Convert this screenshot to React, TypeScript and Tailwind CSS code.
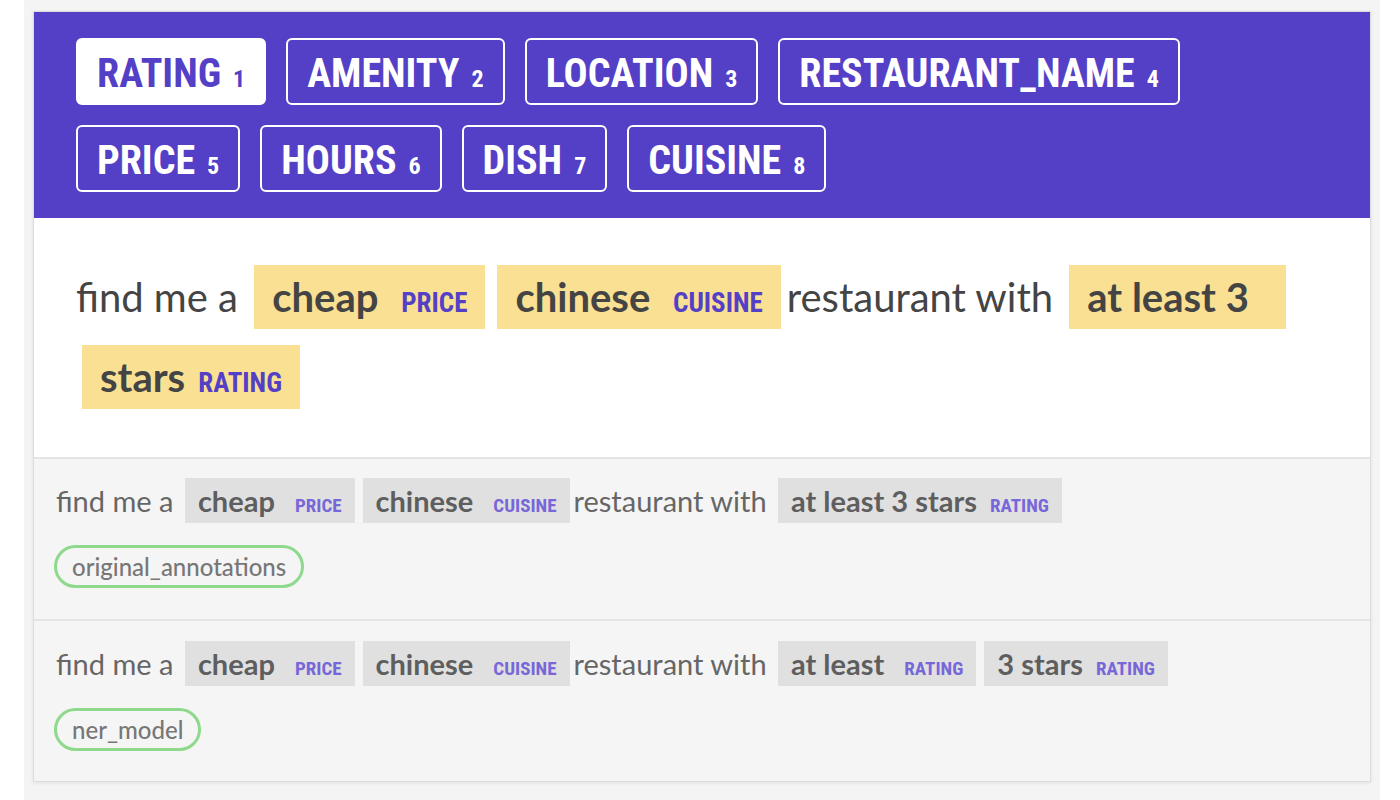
import React from 'react';

const labels = ['RATING', 'AMENITY', 'LOCATION', 'RESTAURANT_NAME', 'PRICE', 'HOURS', 'DISH', 'CUISINE'];

const cond = "font-['Roboto_Condensed','Liberation_Sans_Narrow','DejaVu_Sans_Condensed',Roboto,sans-serif] font-stretch-condensed";

const Mark: React.FC<{ text: React.ReactNode; label: string }> = ({ text, label }) => (
  <span className="mx-[6px] box-decoration-clone bg-[#fae092] px-[18px] py-[8px] font-bold">
    {text}
    <span className={`${cond} ml-[13px] text-[27px] font-bold leading-none text-[#5440c6]`}>{label}</span>
  </span>
);

const SmallMark: React.FC<{ text: string; label: string }> = ({ text, label }) => (
  <span className="mx-[4px] bg-[#e0e0e0] px-[13px] py-[5px] font-bold text-[#5e5e5e]">
    {text}
    <span className={`${cond} ml-[13px] text-[19px] font-bold leading-none text-[#7767d9]`}>{label}</span>
  </span>
);

const Pill: React.FC<{ children: React.ReactNode }> = ({ children }) => (
  <div className="ml-[-2px] mt-[22px] inline-flex h-[43px] items-center rounded-full border-[3px] border-[#8fd98c] px-[15px] text-[24px] font-medium leading-none text-[#777]">
    {children}
  </div>
);

export default function App() {
  return (
    <div className="min-h-screen bg-white font-['Lato','Noto_Sans',sans-serif]">
      <div className="ml-[24px] w-[1356px] bg-[#f4f4f4] px-[9px] pb-[19px] pt-[11px]">
        <div className="border border-[#dcdcdc] bg-white shadow-[0_1px_4px_rgba(0,0,0,0.08)]">
          {/* label buttons */}
          <div className="flex flex-wrap bg-[#5440c6] px-[32px] py-[16px]">
            {labels.map((l, i) => (
              <div
                key={l}
                className={`m-[10px] flex h-[67px] items-center rounded-[6px] border-2 border-white px-[19px] pt-[4px] ${
                  i === 0 ? 'bg-white text-[#5440c6]' : 'text-white'
                }`}
              >
                <span className={`${cond} text-[40px] font-bold leading-none`}>{l}</span>
                <span className={`${cond} ml-[12px] mt-[10px] text-[24px] font-bold leading-none`}>{i + 1}</span>
              </div>
            ))}
          </div>

          {/* current example */}
          <div className="px-[42px] pb-[40px] pt-[39px] text-[40px] leading-[80px] text-[#444]">
            find me a <Mark text="cheap " label="PRICE" />
            <Mark text="chinese " label="CUISINE" />
            restaurant with{' '}
            <Mark
              text={
                <>
                  at least 3{'\u00a0\u00a0'}
                  <br />
                  stars
                </>
              }
              label="RATING"
            />
          </div>

          {/* compared annotations */}
          <div className="border-t-2 border-[#e4e4e4] bg-[#f5f5f5] px-[22px] pb-[31px] pt-[20px]">
            <div className="text-[29px] leading-[44px] text-[#666]">
              find me a <SmallMark text="cheap " label="PRICE" />
              <SmallMark text="chinese " label="CUISINE" />
              restaurant with <SmallMark text="at least 3 stars" label="RATING" />
            </div>
            <Pill>original_annotations</Pill>
          </div>
          <div className="border-t-2 border-[#e4e4e4] bg-[#f5f5f5] px-[22px] pb-[30px] pt-[21px]">
            <div className="text-[29px] leading-[44px] text-[#666]">
              find me a <SmallMark text="cheap " label="PRICE" />
              <SmallMark text="chinese " label="CUISINE" />
              restaurant with <SmallMark text="at least " label="RATING" />
              <SmallMark text="3 stars" label="RATING" />
            </div>
            <Pill>ner_model</Pill>
          </div>
        </div>
      </div>
    </div>
  );
}
